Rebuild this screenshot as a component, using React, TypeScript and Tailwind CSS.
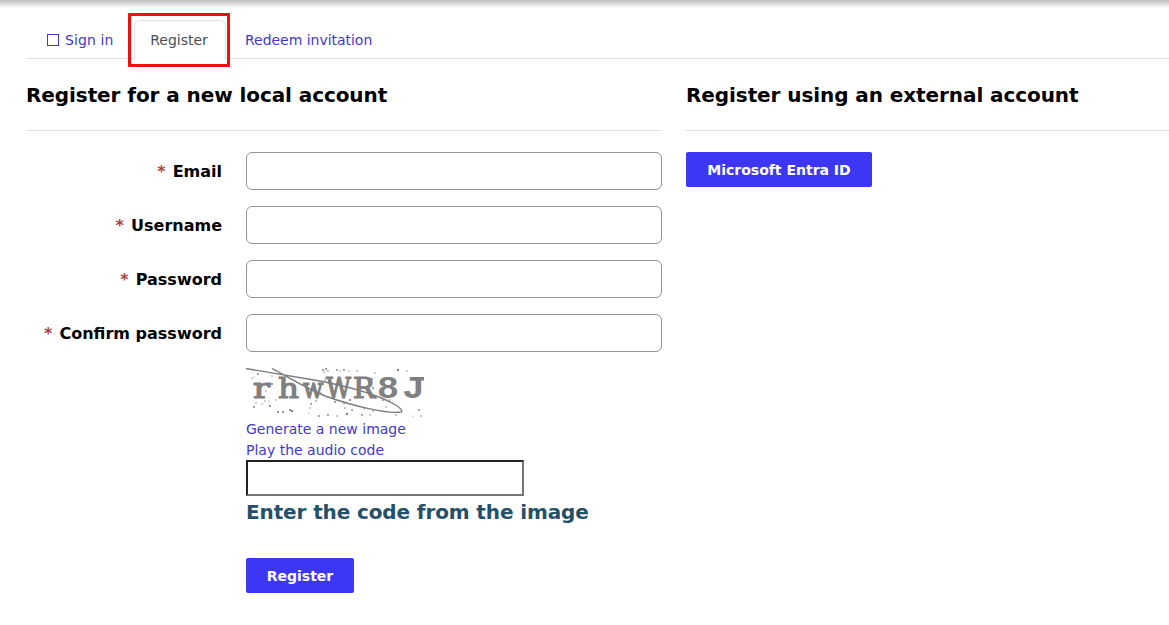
import type { ReactNode } from "react"

const fields = ["Email", "Username", "Password", "Confirm password"]

// char, left edge, advance width
const slabGlyphs: [string, number, number][] = [
  ["r", 253, 17],
  ["h", 278, 21],
  ["w", 303, 20],
  ["W", 326, 25],
  ["R", 353, 22],
]

const monoGlyphs: [string, number, number][] = [
  ["8", 377, 22],
  ["J", 402, 23],
]

// x, y, radius
const specks: [number, number, number][] = [
  [252, 378, 0.7], [254, 377, 0.6], [258, 374, 1], [272, 376, 0.7], [272, 384, 1], [266, 391, 0.7],
  [276, 370, 0.6], [256, 403, 0.7], [254, 407, 1], [262, 404, 0.7], [265, 401, 0.7], [270, 406, 1.1],
  [269, 401, 0.6], [278, 412, 1.1], [283, 412, 1.1], [292, 411, 1.3], [290, 410, 1.1], [276, 400, 0.7],
  [311, 404, 0.9], [310, 408, 0.7], [316, 401, 0.8], [309, 413, 0.6], [319, 416, 0.9], [328, 415, 0.9],
  [323, 370, 0.9], [326, 369, 1], [328, 371, 0.8], [324, 372, 0.7], [337, 370, 0.9], [340, 371, 0.7],
  [344, 370, 0.9], [349, 371, 0.7], [357, 371, 0.8], [325, 380, 0.8], [323, 384, 0.9], [321, 393, 0.8],
  [335, 402, 1], [344, 403, 0.9], [350, 400, 1.1], [345, 408, 0.8], [337, 416, 0.8], [347, 414, 1.2],
  [352, 410, 0.9], [362, 415, 0.9], [364, 409, 0.7], [372, 379, 1], [375, 373, 0.7], [373, 388, 1],
  [398, 370, 1.2], [407, 371, 0.7], [383, 400, 0.9], [390, 400, 0.8], [376, 398, 0.8], [373, 411, 0.8],
  [370, 415, 0.7], [386, 407, 0.7], [396, 415, 0.8], [419, 410, 0.9], [421, 416, 0.8], [413, 416, 0.6],
]

function Heading({ children }: { children: ReactNode }) {
  return (
    <h2 className="h-[52px] border-b border-[#e0e0e3] pt-1 text-[20px] leading-6 font-bold tracking-[-0.08px] text-black">
      {children}
    </h2>
  )
}

function Captcha() {
  return (
    <svg className="block h-[50px] w-[185px]" viewBox="246 368 185 50" aria-label="Captcha">
      <g fill="#808080" stroke="#808080" strokeWidth="1.2" className="font-['DejaVu_Serif',serif] text-[27px]">
        {slabGlyphs.map(([char, x, width]) => (
          <text key={char} x={x} y="397.5" textLength={width} lengthAdjust="spacingAndGlyphs">
            {char}
          </text>
        ))}
      </g>
      <g fill="#808080" className="font-['Liberation_Mono',monospace] text-[31px] font-bold">
        {monoGlyphs.map(([char, x, width]) => (
          <text key={char} x={x} y="397.5" textLength={width} lengthAdjust="spacingAndGlyphs">
            {char}
          </text>
        ))}
        <rect x="410" y="377" width="14" height="3.5" />
      </g>
      <path
        d="M246 368.5 L320 381 C350 387 378 395 394 404 C401 408 403 411 401 412 C388 414 356 407 325 396 C305 388 290 378 272 368.5"
        fill="none"
        stroke="#7c7c7c"
        strokeWidth="1.4"
      />
      {specks.map(([x, y, r]) => (
        <circle key={`${x}-${y}`} cx={x} cy={y} r={r} fill="#808080" />
      ))}
    </svg>
  )
}

export default function App() {
  return (
    <div className="h-[625px] w-full overflow-hidden bg-white font-['DejaVu_Sans',Verdana,sans-serif] text-[14px]">
      <div className="h-2 bg-linear-to-b from-[#bdbdbd] to-white" />
      <nav className="ml-[26px] flex h-[51px] items-end border-b border-[#dee0e5] text-[#4338ca]">
        <a className="flex h-[39px] w-[108px] items-center gap-[6px] pt-[3px] pl-[21px] tracking-[0.1px]">
          <span className="-mt-px h-[12px] w-[12px] border border-current" />
          Sign in
        </a>
        <div className="relative -mb-px h-[39px] w-[92px] rounded-t-md border border-b-0 border-[#dee0e5] bg-white pr-[2px] text-center leading-[38px] text-[#495057]">
          Register
          <div className="absolute -top-[8px] -left-[7px] h-[54px] w-[102px] rounded-[1px] border-[3px] border-[#ee1111]" />
        </div>
        <a className="h-[39px] pl-[19px] leading-[42px] tracking-[-0.03px]">Redeem invitation</a>
      </nav>
      <main className="ml-[26px] flex gap-6 pt-5">
        <section className="w-[636px]">
          <Heading>Register for a new local account</Heading>
          <form className="pt-[21px]">
            {fields.map((field) => (
              <div key={field} className="mb-4 flex h-[38px] items-center">
                <label className="w-[196px] pt-px text-right text-[16px] font-bold text-black">
                  <span className="mr-[1.5px] text-[#a94442]">*</span> {field}
                </label>
                <input className="ml-6 h-[38px] w-[416px] rounded-md border border-[#949494]" />
              </div>
            ))}
            <div className="ml-[220px]">
              <Captcha />
              <a className="block h-[21px] pt-px leading-[21px] text-[#4338ca]">Generate a new image</a>
              <a className="block h-[21px] pt-px leading-[21px] text-[#4338ca]">Play the audio code</a>
              <input className="block h-9 w-[278px] border-2 border-t-[#212121] border-r-[#767676] border-b-[#767676] border-l-[#212121]" />
              <div className="text-[20px] leading-8 font-bold tracking-[-0.12px] text-[#24506a]">
                Enter the code from the image
              </div>
              <button className="mt-[30px] block h-[35px] w-[108px] rounded-[2px] bg-[#3d37f5] pt-px font-bold text-white">
                Register
              </button>
            </div>
          </form>
        </section>
        <section className="flex-1">
          <Heading>Register using an external account</Heading>
          <button className="mt-[21px] h-[35px] w-[186px] rounded-[2px] bg-[#3d37f5] pt-px font-bold text-white">
            Microsoft Entra ID
          </button>
        </section>
      </main>
    </div>
  )
}
